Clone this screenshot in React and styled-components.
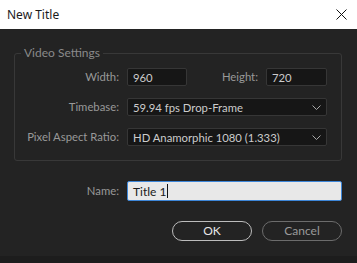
import React from "react";
import styled, { createGlobalStyle } from "styled-components";

const GlobalStyle = createGlobalStyle`
  html, body { margin: 0; padding: 0; background: #232323; }
  * { box-sizing: border-box; }
`;

const Window = styled.div({
  width: "357px",
  height: "263px",
  display: "flex",
  flexDirection: "column",
  fontFamily: "Lato, 'Noto Sans', sans-serif",
  fontSize: "11.3px",
  overflow: "hidden",
});

const TitleBar = styled.div({
  height: "29px",
  flex: "0 0 29px",
  background: "#ffffff",
  display: "flex",
  alignItems: "center",
  justifyContent: "space-between",
  padding: "0 10px 0 7px",
  color: "#1b1b1b",
  fontFamily: "'Noto Sans', sans-serif",
  fontSize: "12px",
});

const Body = styled.div({
  flex: "1",
  background: "#232323",
  paddingTop: "16px",
  display: "flex",
  flexDirection: "column",
});

const Group = styled.fieldset({
  margin: "0 15px 0 14px",
  padding: "7px 14px 14px 0",
  border: "1px solid #383838",
  borderRadius: "3px",
  display: "grid",
  gridTemplateColumns: "104px 1fr",
  columnGap: "8px",
  rowGap: "12px",
  alignItems: "center",
  minWidth: 0,
});

const Legend = styled.legend({
  marginLeft: "6px",
  padding: "0 3px",
  lineHeight: "16px",
  color: "#8a8a8a",
  fontSize: "12px",
});

const Label = styled.label({
  textAlign: "right",
  color: "#999999",
  whiteSpace: "nowrap",
  lineHeight: "18px",
});

const Field = styled.div(({ width }) => ({
  width: width || "auto",
  height: "18px",
  background: "#161616",
  border: "1px solid #363636",
  borderRadius: "2px",
  color: "#cccccc",
  padding: "0 5px",
  display: "flex",
  alignItems: "center",
  justifyContent: "space-between",
  whiteSpace: "nowrap",
}));

const SizeRow = styled.div({
  display: "flex",
  alignItems: "center",
});

const InlineLabel = styled(Label)({
  flex: "1",
  marginRight: "8px",
});

const NameRow = styled.div({
  marginTop: "20px",
  padding: "0 15px 0 14px",
  display: "grid",
  gridTemplateColumns: "105px 1fr",
  columnGap: "8px",
  alignItems: "center",
});

const NameField = styled.div({
  height: "20px",
  background: "#e8e8e8",
  border: "1px solid #3d86d8",
  borderRadius: "2px",
  color: "#1a1a1a",
  padding: "0 5px",
  display: "flex",
  alignItems: "center",
  fontSize: "12px",
});

const Caret = styled.span({
  display: "inline-block",
  width: "1px",
  height: "14px",
  background: "#111",
  marginLeft: "1px",
});

const Buttons = styled.div({
  marginTop: "20px",
  padding: "0 15px",
  display: "flex",
  justifyContent: "flex-end",
  gap: "10px",
});

const Button = styled.button(({ primary }) => ({
  width: "80px",
  height: "20px",
  borderRadius: "10px",
  background: "transparent",
  border: `1px solid ${primary ? "#bcbcbc" : "#6c6c6c"}`,
  color: primary ? "#e6e6e6" : "#9a9a9a",
  fontFamily: "inherit",
  fontSize: "12px",
  padding: 0,
  lineHeight: "18px",
}));

const Footer = styled.div({
  height: "7px",
  flex: "0 0 7px",
  background: "#1d1d1d",
});

const Chevron = () => (
  <svg width="9" height="5" viewBox="0 0 9 5">
    <path d="M0.5 0.5 L4.5 4.5 L8.5 0.5" fill="none" stroke="#a8a8a8" strokeWidth="1" />
  </svg>
);

const CloseIcon = () => (
  <svg width="11" height="11" viewBox="0 0 11 11">
    <path d="M0.5 0.5 L10.5 10.5 M10.5 0.5 L0.5 10.5" stroke="#111" strokeWidth="1" />
  </svg>
);

export default function App() {
  return (
    <>
      <GlobalStyle />
      <Window>
        <TitleBar>
          <span>New Title</span>
          <CloseIcon />
        </TitleBar>
        <Body>
          <Group>
            <Legend>Video Settings</Legend>
            <Label>Width:</Label>
            <SizeRow>
              <Field width="60px">960</Field>
              <InlineLabel>Height:</InlineLabel>
              <Field width="61px">720</Field>
            </SizeRow>
            <Label>Timebase:</Label>
            <Field>
              <span>59.94 fps Drop-Frame</span>
              <Chevron />
            </Field>
            <Label>Pixel Aspect Ratio:</Label>
            <Field>
              <span>HD Anamorphic 1080 (1.333)</span>
              <Chevron />
            </Field>
          </Group>
          <NameRow>
            <Label>Name:</Label>
            <NameField>
              Title 1<Caret />
            </NameField>
          </NameRow>
          <Buttons>
            <Button primary>OK</Button>
            <Button>Cancel</Button>
          </Buttons>
        </Body>
        <Footer />
      </Window>
    </>
  );
}
